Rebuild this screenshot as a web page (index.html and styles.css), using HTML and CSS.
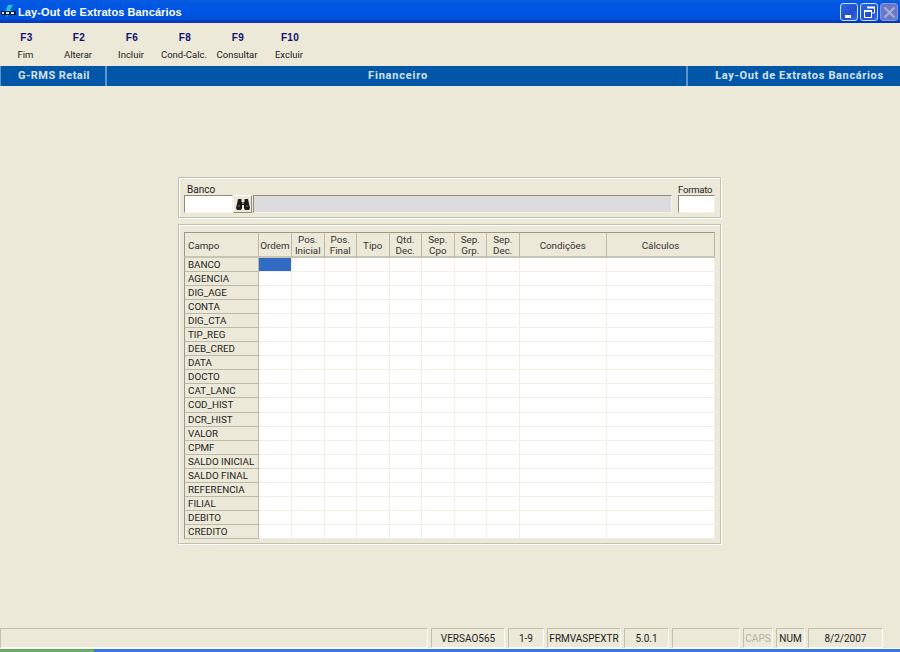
FILE: index.html
```html
<!DOCTYPE html>
<html lang="pt">
<head>
<meta charset="utf-8">
<title>Lay-Out de Extratos Bancários</title>
<link rel="stylesheet" href="styles.css">
</head>
<body>
<div class="window">
  <header class="titlebar">
    <svg class="appicon" width="18" height="16" viewBox="0 0 18 16">
      <path d="M8 1 L13 1 L10 6 L12 6 L6 14 L8 8 L5 8 Z" fill="#19c6d8"/>
      <rect x="1" y="7" width="15" height="4" fill="#10203a"/>
      <path d="M2 8h2v2H2zM6 8h3v2H6zM11 8h3v2h-3z" fill="#dfe8f0"/>
    </svg>
    <span class="title">Lay-Out de Extratos Bancários</span>
    <div class="winbtns">
      <span class="winbtn"><svg width="19" height="19" viewBox="0 0 19 19"><rect x="5" y="12" width="6" height="3" fill="#fff"/></svg></span>
      <span class="winbtn"><svg width="19" height="19" viewBox="0 0 19 19"><path d="M7.500 4.500h7v5.500h-2.500" fill="none" stroke="#fff" stroke-width="1"/><path d="M7 4.500h8" stroke="#fff" stroke-width="2"/><rect x="4.500" y="8" width="7" height="6.500" fill="none" stroke="#fff" stroke-width="1"/><path d="M4 8h8" stroke="#fff" stroke-width="2"/></svg></span>
      <span class="winbtn disabled"><svg width="19" height="19" viewBox="0 0 19 19"><path d="M4.500 4.500l10 10M14.500 4.500l-10 10" stroke="#a9aed0" stroke-width="2.200"/></svg></span>
    </div>
  </header>

  <nav class="toolbar">
    <div class="tool t1"><b>F3</b><span>Fim</span></div>
    <div class="tool t2"><b>F2</b><span>Alterar</span></div>
    <div class="tool t3"><b>F6</b><span>Incluir</span></div>
    <div class="tool t4"><b>F8</b><span>Cond-Calc.</span></div>
    <div class="tool t5"><b>F9</b><span>Consultar</span></div>
    <div class="tool t6"><b>F10</b><span>Excluir</span></div>
  </nav>

  <div class="band">
    <div class="band-a">G-RMS Retail</div>
    <div class="band-b">Financeiro</div>
    <div class="band-c">Lay-Out de Extratos Bancários</div>
  </div>

  <main class="content">
    <section class="group search">
      <div class="field banco">
        <label>Banco</label>
        <div class="lookup">
          <span class="input w-banco"></span>
          <span class="findbtn">
            <svg width="16" height="14" viewBox="0 0 16 14"><path d="M3 2h3.500v3h3V2H13l1 5 1 4-1 2h-4l-1-2V8H7v3l-1 2H2l-1-2 1-4z" fill="#1a1a1a"/><path d="M3.500 9h1M11.500 9h1M7 6h2" stroke="#d8d4c4" stroke-width="1"/></svg>
          </span>
          <span class="input readonly"></span>
        </div>
      </div>
      <div class="field formato">
        <label>Formato</label>
        <span class="input w-formato"></span>
      </div>
    </section>

    <section class="group gridbox">
      <div class="grid">
        <div class="hd first">Campo</div>
        <div class="hd">Ordem</div>
        <div class="hd">Pos.<br>Inicial</div>
        <div class="hd">Pos.<br>Final</div>
        <div class="hd">Tipo</div>
        <div class="hd">Qtd.<br>Dec.</div>
        <div class="hd">Sep.<br>Cpo</div>
        <div class="hd">Sep.<br>Grp.</div>
        <div class="hd">Sep.<br>Dec.</div>
        <div class="hd">Condições</div>
        <div class="hd">Cálculos</div>
      </div>
      <div class="grid body" id="rows"></div>
    </section>
  </main>

  <footer class="status">
    <div class="pane p0"></div>
    <div class="pane p1">VERSAO565</div>
    <div class="pane p2">1-9</div>
    <div class="pane p3">FRMVASPEXTR</div>
    <div class="pane p4">5.0.1</div>
    <div class="pane p5"></div>
    <div class="pane p6 off">CAPS</div>
    <div class="pane p7">NUM</div>
    <div class="pane p8">8/2/2007</div>
  </footer>
  <div class="taskbar"><span class="start"></span><span class="tasks"></span></div>
</div>
<script src="app.js"></script>
</body>
</html>
```
FILE: styles.css
```css
* { box-sizing: border-box; }
html, body { margin: 0; padding: 0; height: 100%; }
body { background: #ece9d8; font-family: Roboto, "Liberation Sans", Arial, sans-serif; font-size: 10px; color: #1c1c1c; overflow: hidden; }
.window { width: 900px; height: 652px; display: flex; flex-direction: column; }

.titlebar { height: 23px; flex: none; display: flex; align-items: center; color: #fff;
  background: linear-gradient(#0a5be0 0, #0258e2 3px, #0055e5 12px, #0150d8 19px, #0138b8 22px, #0a3cb0 23px); }
.appicon { flex: none; }
.title { font: bold 11px "Liberation Sans", sans-serif; letter-spacing: .1px; }
.winbtns { margin-left: auto; display: flex; gap: 2px; padding-right: 2px; }
.winbtn { width: 18px; height: 18px; border: 1px solid #cfdcf8; border-radius: 3px; background: linear-gradient(135deg, #2f68e4, #1f4fd0 60%, #3a6ee8); display: block; overflow: hidden; }
.winbtn svg { display: block; margin: -1px; }
.winbtn.disabled { background: #6a78c8; border-color: #8a96d6; }

.toolbar { height: 43px; flex: none; display: flex; }
.tool { display: flex; flex-direction: column; align-items: center; padding-top: 9px; flex: none; }
.tool b { font: bold 10px "Liberation Sans", sans-serif; color: #10106e; line-height: 12px; letter-spacing: .3px; }
.tool span { font: 9.500px Roboto, sans-serif; line-height: 12px; margin: 5px 2px 0 0; color: #222; white-space: nowrap; }
.t1 { width: 53px; }
.t2 { width: 52px; }
.t3 { width: 54px; }
.t4 { width: 52px; }
.t5 { width: 54px; }
.t6 { width: 50px; }

.band { height: 20px; flex: none; display: flex; background: #0156a8; color: #d6e2ee; font: bold 11px/20px Roboto, sans-serif; letter-spacing: .45px; }
.band > div { border-right: 2px solid #5d95c8; text-align: center; flex: none; }
.band-a { width: 107px; padding-left: 2px; border-left: 1px solid #5d95c8; }
.band-b { width: 581px; padding-left: 3px; letter-spacing: .8px; }
.band-c { flex: 1 !important; border-right: 0 !important; padding-left: 11px; letter-spacing: .65px; }

.content { flex: 1; padding: 91px 0 0 178px; }
.group { width: 543px; border: 1px solid #c4c0ae; box-shadow: inset 1px 1px 0 #fff, 1px 1px 0 #fff; }
.search { height: 41px; display: flex; gap: 6px; padding: 6px 4px 0 5px; margin-bottom: 6px; }
.field { display: flex; flex-direction: column; }
.banco { width: 488px; }
.formato { width: 37px; }
label { font: 10px/11px Roboto, sans-serif; padding-left: 3px; height: 11px; color: #222; }
.formato label { padding-left: 0; white-space: nowrap; font-size: 9.500px; letter-spacing: -.2px; }
.lookup { display: flex; }
.input { display: block; height: 18px; background: #fff; border: 1px solid; border-color: #8f8c7c #f4f2e8 #f4f2e8 #8f8c7c; }
.w-banco { width: 49px; flex: none; }
.w-formato { width: 37px; }
.findbtn { width: 19px; height: 18px; flex: none; border: 1px solid; border-color: #fff #8f8c7c #8f8c7c #fff; display: flex; align-items: center; justify-content: center; }
.readonly { flex: 1; background: #dcdcdc; margin-left: 1px; }

.gridbox { height: 320px; padding: 7px 0 0 5px; }
.grid { display: grid; width: 531px; grid-template-columns: 75px 33px repeat(7, 32.500px) 87.500px 108px; }
.hd { height: 26px; padding-top: 1px; display: flex; align-items: center; justify-content: center; text-align: center; font: 9.800px/11px Roboto, sans-serif; border-top: 1px solid #9c9988; border-right: 1px solid #bcb9a8; border-bottom: 2px solid #c8c5b4; background: #ece9d8; color: #333; }
.hd.first { justify-content: flex-start; padding-left: 3px; border-left: 1px solid #9c9988; }
.body { height: 281px; grid-auto-rows: 14.050px; }
.rowhead { font: 9.800px/13.500px Roboto, sans-serif; padding-left: 3px; background: #ece9d8; border-left: 1px solid #9c9988; border-right: 1px solid #bcb9a8; border-bottom: 1px solid #bcb9a8; white-space: nowrap; color: #222; }
.cell { background: #fff; border-right: 1px solid #f1efe5; border-bottom: 1px solid #f1efe5; }
.cell.sel { background: #316ac5; }

.status { height: 20px; flex: none; display: flex; gap: 3px; }
.pane { flex: none; border: 1px solid; border-color: #c4c0ae #fff #fff #c4c0ae; font: 10px/19px Roboto, sans-serif; text-align: center; color: #222; white-space: nowrap; }
.p0 { width: 428px; }
.p1 { width: 74px; }
.p2 { width: 36px; }
.p3 { width: 74px; }
.p4 { width: 45px; }
.p5 { width: 68px; }
.p6 { width: 30px; }
.p7 { width: 29px; }
.p8 { width: 75px; }
.off { color: #b4b2a6; }

.taskbar { height: 4px; flex: none; display: flex; border-top: 1px solid #fbfaf2; }
.start { width: 94px; background: linear-gradient(#5aa85a, #70b070); }
.tasks { flex: 1; background: #3a78e0; }
```
FILE: app.js
```js
var names = ["BANCO","AGENCIA","DIG_AGE","CONTA","DIG_CTA","TIP_REG","DEB_CRED","DATA","DOCTO","CAT_LANC","COD_HIST","DCR_HIST","VALOR","CPMF","SALDO INICIAL","SALDO FINAL","REFERENCIA","FILIAL","DEBITO","CREDITO"];
var host = document.getElementById("rows");
names.forEach(function (name, r) {
  var h = document.createElement("div");
  h.className = "rowhead";
  h.textContent = name;
  host.appendChild(h);
  for (var c = 0; c < 10; c++) {
    var d = document.createElement("div");
    d.className = "cell" + (r === 0 && c === 0 ? " sel" : "");
    host.appendChild(d);
  }
});
```
